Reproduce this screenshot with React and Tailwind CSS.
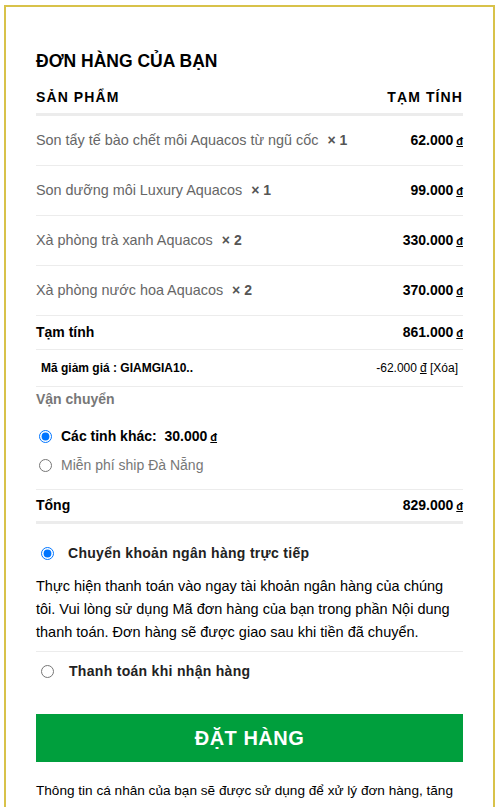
const items = [
  { name: "Son tẩy tế bào chết môi Aquacos từ ngũ cốc", qty: 1, price: "62.000" },
  { name: "Son dưỡng môi Luxury Aquacos", qty: 1, price: "99.000" },
  { name: "Xà phòng trà xanh Aquacos", qty: 2, price: "330.000" },
  { name: "Xà phòng nước hoa Aquacos", qty: 2, price: "370.000" },
];

function Dong() {
  return <span className="ml-[3px] text-[11px] underline">đ</span>;
}

export default function App() {
  return (
    <div className="min-h-[807px] bg-white pt-[5px] pl-[4px] pr-[2px] font-['Liberation_Sans',Arial,sans-serif] text-[#111]">
      <div className="border-2 border-b-0 border-[#d8c24a] px-[30px] pt-[42px] pb-10">
        <h3 className="text-[17.5px] font-bold leading-6 text-black">ĐƠN HÀNG CỦA BẠN</h3>

        {/* table header */}
        <div className="mt-[14px] flex items-center justify-between border-b-[3px] border-[#ececec] pb-[5px] text-[14px] font-bold uppercase tracking-[1.1px] text-black">
          <span>Sản phẩm</span>
          <span>Tạm tính</span>
        </div>

        {items.map((it) => (
          <div
            key={it.name}
            className="flex h-[50px] items-center justify-between border-b border-[#ececec] text-[14.4px]"
          >
            <span className="text-[#666]">
              {it.name}
              <b className="ml-[9px] text-[14px] text-[#555]">× {it.qty}</b>
            </span>
            <span className="text-[14px] font-bold text-black">
              {it.price}
              <Dong />
            </span>
          </div>
        ))}

        <div className="flex h-[34px] items-center justify-between border-b border-[#ececec] text-[14px] font-bold text-black">
          <span>Tạm tính</span>
          <span>
            861.000
            <Dong />
          </span>
        </div>

        <div className="flex h-[37px] items-center justify-between border-b border-[#ececec] pl-[5px] pr-[5px] text-[12px] text-black">
          <span className="font-bold">Mã giảm giá : GIAMGIA10..</span>
          <span>
            -62.000
            <span className="ml-[3px] underline">đ</span> [Xóa]
          </span>
        </div>

        <div className="border-b border-[#ececec] pb-[13px]">
          <div className="pt-[4px] text-[14px] font-bold leading-[16px] text-[#777]">Vận chuyển</div>
          <label className="mt-[19px] flex items-center gap-[9px] pl-[3px] text-[14px] font-bold text-black">
            <input type="radio" name="ship" defaultChecked className="m-0 h-[13px] w-[13px] accent-[#0075ff]" />
            <span>
              Các tỉnh khác:&nbsp; 30.000
              <Dong />
            </span>
          </label>
          <label className="mt-[8px] flex items-center gap-[9px] pl-[3px] text-[14px] text-[#777]">
            <input type="radio" name="ship" className="m-0 h-[13px] w-[13px]" />
            <span>Miễn phí ship Đà Nẵng</span>
          </label>
        </div>

        <div className="flex h-[34px] items-center justify-between border-b-[3px] border-[#ececec] text-[14px] font-bold text-black">
          <span>Tổng</span>
          <span>
            829.000
            <Dong />
          </span>
        </div>

        {/* payment methods */}
        <div className="mt-[19px]">
          <label className="flex items-center gap-[14px] pl-[5px] text-[14px] font-bold tracking-[0.3px] text-[#222]">
            <input type="radio" name="pay" defaultChecked className="m-0 h-[13px] w-[13px] accent-[#0075ff]" />
            <span>Chuyển khoản ngân hàng trực tiếp</span>
          </label>
          <p className="mt-[11px] border-b border-[#ececec] pb-[7px] text-[14.5px] leading-[23px] text-black">
            Thực hiện thanh toán vào ngay tài khoản ngân hàng của chúng tôi. Vui lòng sử dụng Mã đơn hàng của bạn trong
            phần Nội dung thanh toán. Đơn hàng sẽ được giao sau khi tiền đã chuyển.
          </p>
          <label className="mt-[9px] flex items-center gap-[15px] pl-[5px] text-[14px] font-bold tracking-[0.3px] text-[#222]">
            <input type="radio" name="pay" className="m-0 h-[13px] w-[13px]" />
            <span>Thanh toán khi nhận hàng</span>
          </label>
        </div>

        <button className="mt-[32px] flex h-[48px] w-full items-center justify-center bg-[#009f3d] text-[20px] font-bold tracking-[0.5px] text-white">
          ĐẶT HÀNG
        </button>

        <p className="mt-[17px] text-[13.6px] leading-[23px] text-black">
          Thông tin cá nhân của bạn sẽ được sử dụng để xử lý đơn hàng, tăng cường trải nghiệm sử dụng website, và cho các
          mục đích cụ thể khác đã được mô tả trong chính sách riêng tư.
        </p>
      </div>
    </div>
  );
}
